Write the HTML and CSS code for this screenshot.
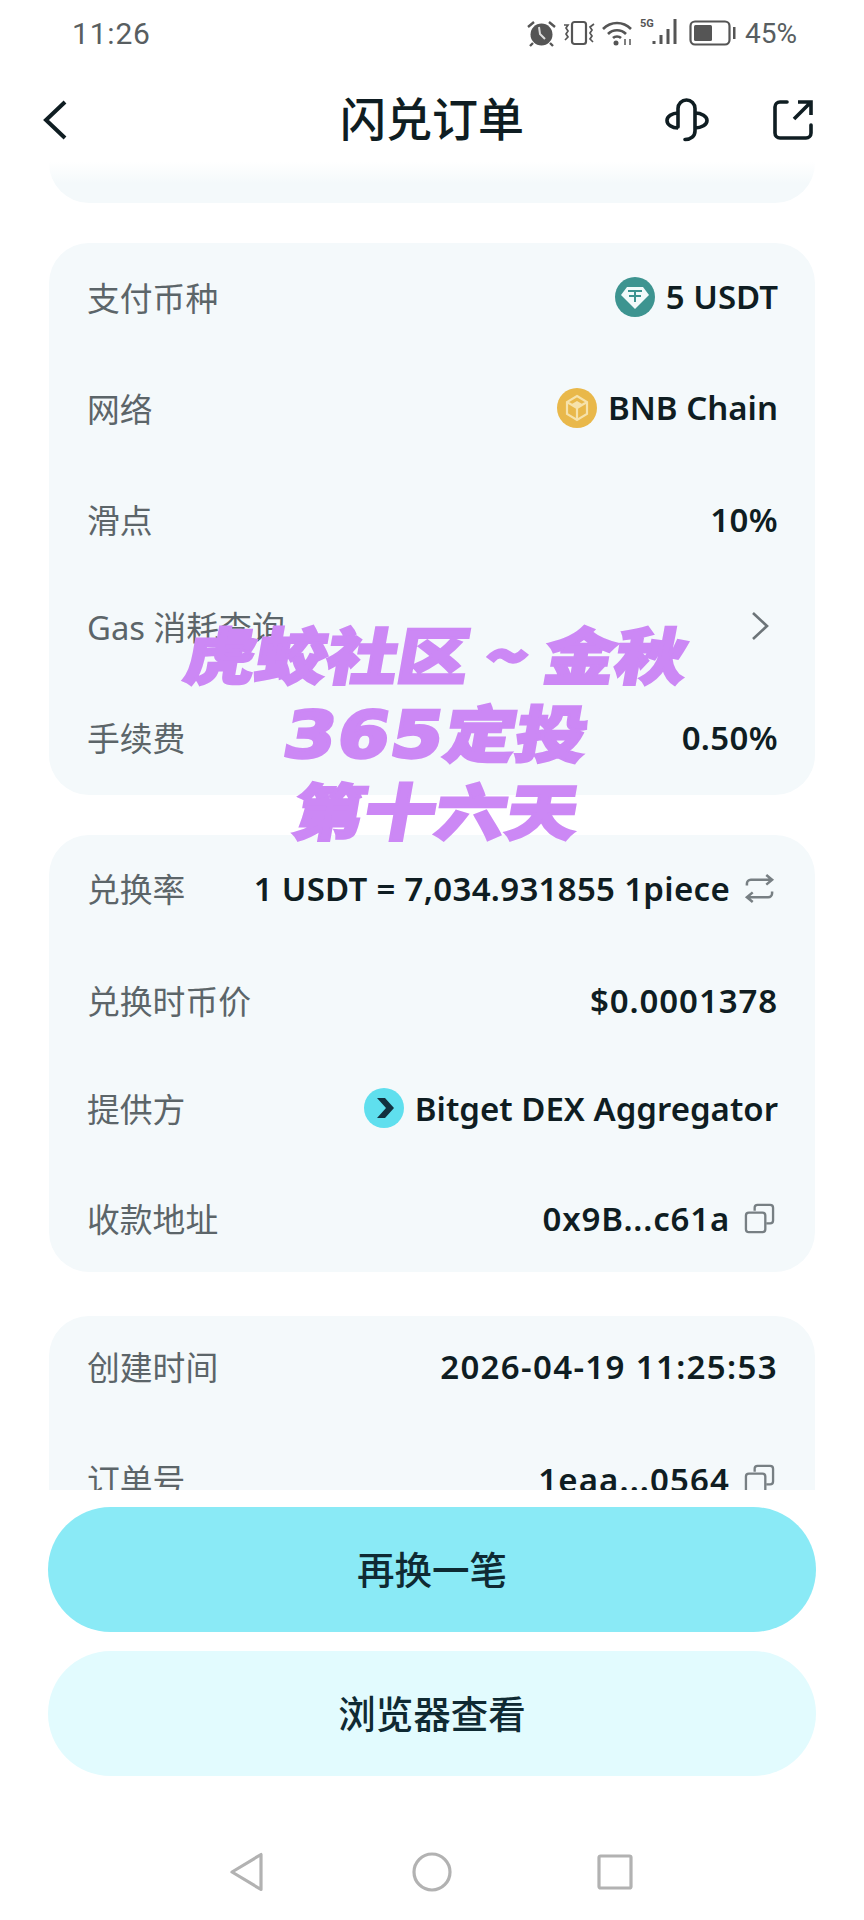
FILE: index.html
```html
<!DOCTYPE html>
<html lang="zh">
<head>
<meta charset="utf-8">
<title>闪兑订单</title>
<link rel="stylesheet" href="styles.css">
</head>
<body>
<div class="phone">
  <div class="status">
    <span class="time">11:26</span>
    <div class="status-right">
      <svg width="29" height="27" viewBox="0 0 29 27"><circle cx="14.500" cy="14.500" r="11" fill="#555"/><path d="M12 7l1 7 5 5" stroke="#ddd" stroke-width="2" fill="none"/><path d="M1 7l6-5M28 7l-6-5M6 23l-3 3M23 23l3 3" stroke="#555" stroke-width="2.400" fill="none"/></svg>
      <svg width="32" height="26" viewBox="0 0 32 26"><rect x="9" y="2" width="14" height="22" rx="2.500" fill="none" stroke="#555" stroke-width="2.200"/><path d="M1 5h4l-2 3 2 3-2 3 2 3-3 3M31 4l-4 3 2 3-2 3 2 3-2 3 3 3" fill="none" stroke="#555" stroke-width="1.700"/></svg>
      <svg width="31" height="26" viewBox="0 0 31 26"><path d="M1 9c8-8 20-8 28 0M6 14c5-5 13-5 18 0M11 18c2-2 6-2 8 0" fill="none" stroke="#555" stroke-width="2.600"/><circle cx="14" cy="23" r="2.500" fill="#555"/><path d="M23 19v6M28 19v6" stroke="#555" stroke-width="1.500"/></svg>
      <svg class="sig" width="41" height="28" viewBox="0 0 41 28"><text x="0" y="9" class="fiveg">5G</text><path d="M14 26v-3M21 26v-9M28 26v-15M35 26v-25" stroke="#555" stroke-width="3"/></svg>
      <svg class="bat" width="47" height="26" viewBox="0 0 47 26"><rect x="1.500" y="1.500" width="39" height="23" rx="4.500" fill="none" stroke="#555" stroke-width="2.200"/><rect x="5" y="5" width="18" height="16" rx="1.500" fill="#555"/><rect x="44" y="7" width="2.500" height="12" fill="#555"/></svg>
      <span class="pct">45%</span>
    </div>
  </div>

  <header class="nav">
    <svg class="back" width="24" height="40" viewBox="0 0 24 40"><path d="M22 2L3 20l19 18" fill="none" stroke="#0f1d22" stroke-width="4"/></svg>
    <h1 class="title">闪兑订单</h1>
    <div class="nav-right">
      <svg width="44" height="44" viewBox="0 0 44 44"><path d="M13 29V10.500a8.500 8.500 0 0 1 17 0V33C30 38 26 41.500 20 41.500" fill="none" stroke="#0f1d22" stroke-width="3.600" stroke-linecap="round"/><path d="M13 15a11 7.500 0 0 0 0 15M30 15a12 7.500 0 0 1 0 15" fill="none" stroke="#0f1d22" stroke-width="3.600"/></svg>
      <svg width="40" height="40" viewBox="0 0 40 40"><path d="M14 2H7a5 5 0 0 0-5 5v26a5 5 0 0 0 5 5h26a5 5 0 0 0 5-5v-8" fill="none" stroke="#0f1d22" stroke-width="3.600" stroke-linecap="round"/><path d="M21 19L38 2M25 2h13v13" fill="none" stroke="#0f1d22" stroke-width="3.600"/></svg>
    </div>
  </header>

  <main class="scroll">
    <section class="card stub"></section>

    <section class="card c1">
      <div class="row"><span class="k">支付币种</span><span class="v">
        <svg class="coin" width="40" height="40" viewBox="0 0 40 40"><circle cx="20" cy="20" r="20" fill="#3d9490"/><path d="M12 10h16l6 8-14 14L6 18z" fill="#f2fafa"/><path d="M13 14h14M20 14v11M14 19h12" stroke="#3d9490" stroke-width="2" fill="none"/></svg>
        <span>5 USDT</span></span></div>
      <div class="row"><span class="k">网络</span><span class="v">
        <svg class="coin" width="40" height="40" viewBox="0 0 40 40"><circle cx="20" cy="20" r="20" fill="#e9b84a"/><path d="M20 8l10 6v12l-10 6-10-6V14zM20 20v12M20 20l-10-6M20 20l10-6" fill="none" stroke="#f6e2ab" stroke-width="2.200"/><path d="M20 13l6 3.500-6 3.500-6-3.500z" fill="#f6e2ab"/></svg>
        <span>BNB Chain</span></span></div>
      <div class="row low"><span class="k">滑点</span><span class="v num1">10%</span></div>
      <div class="row"><span class="k">Gas 消耗查询</span><span class="v">
        <svg class="chev" width="20" height="32" viewBox="0 0 20 32"><path d="M3 3l14 13L3 29" fill="none" stroke="#6c7478" stroke-width="2.600"/></svg></span></div>
      <div class="row"><span class="k">手续费</span><span class="v num1">0.50%</span></div>
    </section>

    <section class="card c2">
      <div class="row"><span class="k">兑换率</span><span class="v rate"><span>1 USDT = 7,034.931855 1piece</span>
        <svg class="ti" width="31" height="31" viewBox="0 0 32 32"><path d="M3 13v-2a4 4 0 0 1 4-4h22M23 2l6 5-6 5M29 19v2a4 4 0 0 1-4 4H3M9 20l-6 5 6 5" fill="none" stroke="#777f83" stroke-width="2.600"/></svg></span></div>
      <div class="row low"><span class="k">兑换时币价</span><span class="v price">$0.0001378</span></div>
      <div class="row"><span class="k">提供方</span><span class="v">
        <svg class="coin" width="40" height="40" viewBox="0 0 40 40"><circle cx="20" cy="20" r="20" fill="#5fdfee"/><path d="M13 10h8l9 10-9 10h-8l9-10z" fill="#12303f"/></svg>
        <span>Bitget DEX Aggregator</span></span></div>
      <div class="row"><span class="k">收款地址</span><span class="v addr"><span>0x9B...c61a</span>
        <svg class="ti" width="31" height="31" viewBox="0 0 32 32"><path d="M11 8V5a3 3 0 0 1 3-3h13a3 3 0 0 1 3 3v13a3 3 0 0 1-3 3h-4" fill="none" stroke="#777f83" stroke-width="2.400"/><rect x="2" y="10" width="20" height="20" rx="3" fill="none" stroke="#777f83" stroke-width="2.400"/></svg></span></div>
    </section>

    <section class="card c3">
      <div class="row"><span class="k">创建时间</span><span class="v num2">2026-04-19 11:25:53</span></div>
      <div class="row"><span class="k">订单号</span><span class="v addr2"><span>1eaa...0564</span>
        <svg class="ti" width="31" height="31" viewBox="0 0 32 32"><path d="M11 8V5a3 3 0 0 1 3-3h13a3 3 0 0 1 3 3v13a3 3 0 0 1-3 3h-4" fill="none" stroke="#777f83" stroke-width="2.400"/><rect x="2" y="10" width="20" height="20" rx="3" fill="none" stroke="#777f83" stroke-width="2.400"/></svg></span></div>
    </section>
    <div class="fade-top"></div>
  </main>

  <footer class="actions">
    <button class="btn primary">再换一笔</button>
    <button class="btn secondary">浏览器查看</button>
  </footer>

  <nav class="sysnav">
    <svg width="33" height="40" viewBox="0 0 33 40"><path d="M31 2.500V37.500L2 20Z" fill="none" stroke="#b2b2b2" stroke-width="3.200" stroke-linejoin="round"/></svg>
    <svg width="40" height="40" viewBox="0 0 40 40"><circle cx="20" cy="20" r="18" fill="none" stroke="#b2b2b2" stroke-width="3.200"/></svg>
    <svg width="36" height="36" viewBox="0 0 36 36"><rect x="2" y="2" width="32" height="32" rx="1.500" fill="none" stroke="#b2b2b2" stroke-width="3.200"/></svg>
  </nav>

  <div class="watermark">
    <div class="wm-line">虎蛟社区 ~ 金秋</div>
    <div class="wm-line"><span class="wm-num">365</span>定投</div>
    <div class="wm-line">第十六天</div>
  </div>
</div>
</body>
</html>
```

FILE: styles.css
```css
* { box-sizing: border-box; }
html, body { margin: 0; padding: 0; background: #fff; }
body { font-family: "Noto Sans", "Noto Sans CJK SC", sans-serif; color: #0f1d22; }
.phone { position: relative; width: 864px; height: 1920px; overflow: hidden; display: flex; flex-direction: column; background: #fff; }

.status { height: 66px; flex: none; display: flex; align-items: center; justify-content: space-between; padding: 0 67px 0 72px; color: #585e61; }
.time { font-family: "Roboto", sans-serif; font-size: 30px; letter-spacing: .8px; }
.status-right { display: flex; align-items: center; gap: 7px; }
.sig { margin-top: -2px; }
.bat { margin-left: 1px; }
.pct { font-family: "Roboto", sans-serif; font-size: 28px; margin-left: 2px; }
.fiveg { font-family: "Roboto", sans-serif; font-size: 11px; font-weight: 700; fill: #555; }

.nav { height: 96px; flex: none; display: grid; grid-template-columns: 1fr auto 1fr; align-items: center; padding: 12px 51px 0; }
.back { margin-left: -8px; }
.title { margin: 0 0 9px; text-align: center; font-size: 46px; font-weight: 500; font-family: "Noto Sans CJK SC", sans-serif; }
.nav-right { display: flex; align-items: center; justify-content: flex-end; gap: 64px; }

.scroll { height: 1328px; flex: none; overflow: hidden; position: relative; padding: 0 49px; display: flex; flex-direction: column; gap: 40px; }
.card { background: #f4f9fb; border-radius: 40px; padding: 0 37px 0 38px; flex: none; }
.stub { height: 41px; border-radius: 0 0 40px 40px; }
.c1 { height: 552px; display: flex; flex-direction: column; }
.c1 .row { height: auto; flex: 1; }
.c2 { height: 437px; }
.c3 { height: 330px; margin-top: 4px; display: flex; flex-direction: column; gap: 6px; }
.c3 .row:first-child { height: 104px; }
.row { display: flex; justify-content: space-between; align-items: center; height: 110px; padding-bottom: 4px; }
.row.low { padding-bottom: 0; }
.k { font-size: 32.800px; color: #5c6569; }
.v { display: flex; align-items: center; gap: 11px; font-size: 33px; font-weight: 560; white-space: nowrap; }
.num1 { letter-spacing: .35px; }
.rate { letter-spacing: .3px; }
.price { letter-spacing: .9px; }
.num2 { letter-spacing: 1.350px; }
.addr { letter-spacing: .8px; }
.addr2 { letter-spacing: 1.100px; }
.coin { flex: none; }
.ti { flex: none; margin-left: 3px; margin-right: 3px; }
.chev { margin-right: 8px; }
.fade-top { position: absolute; left: 0; right: 0; top: 0; height: 22px; background: linear-gradient(#fff, rgba(255,255,255,0)); }

.actions { flex: none; padding: 17px 48px 0; display: flex; flex-direction: column; gap: 19px; }
.btn { height: 125px; border: 0; border-radius: 63px; width: 100%; padding: 0 0 5px; font-family: "Noto Sans CJK SC", sans-serif; font-size: 37.500px; font-weight: 500; color: #0f2a33; }
.primary { background: #8aeaf6; }
.secondary { background: #e2fbfe; }

.sysnav { flex: none; margin-top: 76px; padding-left: 230px; display: flex; align-items: center; }
.sysnav svg:nth-child(1) { margin-right: 149px; }
.sysnav svg:nth-child(2) { margin-right: 145px; }

.watermark { position: absolute; left: 0; right: 0; top: 613px; padding-left: 10px; text-align: center; color: #cc88f5; font-family: "Noto Sans CJK SC", sans-serif; font-weight: 900; font-size: 71px; }
.wm-line { height: 78px; line-height: 78px; transform: skewX(-10deg) scaleY(.86); -webkit-text-stroke: 3px #cc88f5; }
.wm-num { font-family: "DejaVu Sans", sans-serif; font-weight: 700; font-size: 74px; letter-spacing: 2px; -webkit-text-stroke: 4px #cc88f5; }
```
